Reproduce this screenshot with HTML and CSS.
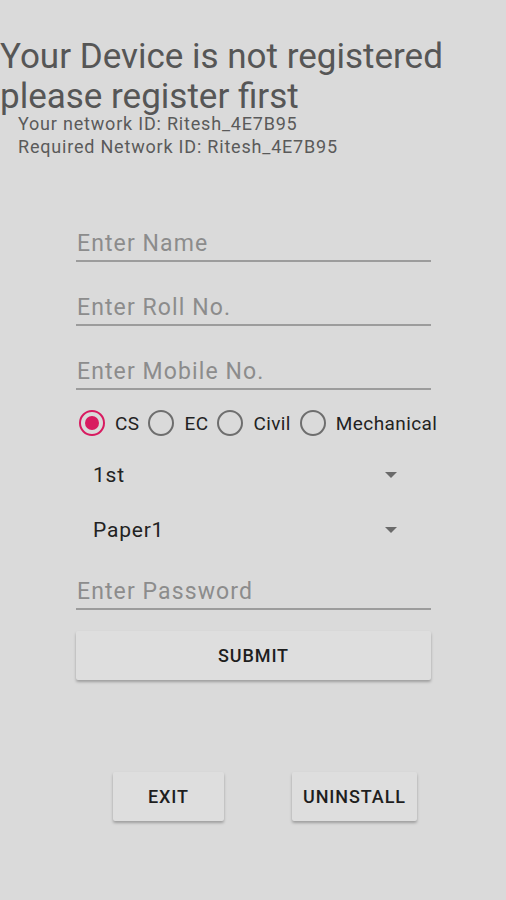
FILE: index.html
```html
<!DOCTYPE html>
<html lang="en">
<head>
  <meta charset="UTF-8" />
  <meta name="viewport" content="width=device-width, initial-scale=1.0"/>
  <title>Register Device</title>
  <link rel="stylesheet" href="styles.css">
</head>
<body>
  <h1 class="titulo">Your Device is not registered please register first</h1>

  <div class="rede">
    <div>Your network ID: Ritesh_4E7B95</div>
    <div>Required Network ID: Ritesh_4E7B95</div>
  </div>

  <form class="form">
    <input class="campo" type="text" placeholder="Enter Name" />
    <input class="campo" type="text" placeholder="Enter Roll No." />
    <input class="campo" type="text" placeholder="Enter Mobile No." />

    <div class="radios">
      <label class="radio"><span class="circulo marcado"></span>CS</label>
      <label class="radio"><span class="circulo"></span>EC</label>
      <label class="radio"><span class="circulo"></span>Civil</label>
      <label class="radio"><span class="circulo"></span>Mechanical</label>
    </div>

    <div class="spinner"><span>1st</span><span class="seta"></span></div>
    <div class="spinner"><span>Paper1</span><span class="seta"></span></div>

    <input class="campo senha" type="password" placeholder="Enter Password" />

    <button type="button" class="botao submit">SUBMIT</button>
  </form>

  <div class="acoes">
    <button type="button" class="botao exit">EXIT</button>
    <button type="button" class="botao">UNINSTALL</button>
  </div>
</body>
</html>
```

FILE: styles.css
```css
body {
  font-family: Roboto, "Liberation Sans", sans-serif;
  background: #dadada;
  margin: 0;
  padding: 0;
  width: 506px;
  height: 900px;
  overflow: hidden;
}
.titulo {
  font-size: 35px;
  font-weight: 400;
  line-height: 40px;
  color: #565656;
  margin: 0;
  padding-top: 37px;
  width: 470px;
}
.rede {
  margin-top: -5px;
  padding-left: 18px;
  font-size: 18px;
  line-height: 23px;
  letter-spacing: 0.8px;
  color: #5a5a5a;
}
.form {
  margin: 68px 0 0 76px;
  width: 355px;
}
.campo {
  display: block;
  box-sizing: border-box;
  width: 100%;
  height: 36px;
  padding: 0 1px;
  margin: 0 0 28px 0;
  border: none;
  border-bottom: 2px solid #9c9c9c;
  background: transparent;
  font-family: inherit;
  font-size: 23px;
  letter-spacing: 1.1px;
  color: #222;
  outline: none;
}
.campo::placeholder {
  color: #8c8c8c;
}
.radios {
  display: flex;
  align-items: center;
  height: 40px;
  margin: -15px 0 8px 0;
  padding-left: 3px;
  font-size: 19px;
  letter-spacing: 0.4px;
  color: #222;
  white-space: nowrap;
}
.radio {
  display: inline-flex;
  align-items: center;
  gap: 10px;
  margin-right: 9px;
}
.circulo {
  box-sizing: border-box;
  width: 26px;
  height: 26px;
  border: 2px solid #6e6e6e;
  border-radius: 50%;
  display: inline-flex;
  align-items: center;
  justify-content: center;
}
.circulo.marcado {
  border-color: #d81b60;
}
.circulo.marcado::after {
  content: "";
  width: 14px;
  height: 14px;
  border-radius: 50%;
  background: #d81b60;
}
.spinner {
  display: flex;
  align-items: center;
  justify-content: space-between;
  height: 48px;
  margin-bottom: 7px;
  padding: 0 34px 0 17px;
  font-size: 21px;
  line-height: 24px;
  letter-spacing: 0.8px;
  color: #222;
}
.seta {
  width: 0;
  height: 0;
  border-left: 6px solid transparent;
  border-right: 6px solid transparent;
  border-top: 6px solid #6a6a6a;
}
.senha {
  margin-top: 20px;
  margin-bottom: 21px;
}
.botao {
  font-family: inherit;
  font-size: 18px;
  font-weight: 500;
  letter-spacing: 0.9px;
  color: #1e1e1e;
  background: #dedede;
  border: none;
  border-radius: 2px;
  height: 49px;
  padding: 0 11px;
  box-shadow: 0 2px 3px rgba(0, 0, 0, 0.28);
}
.submit {
  display: block;
  width: 100%;
}
.acoes {
  display: flex;
  gap: 68px;
  margin-top: 92px;
  padding-left: 113px;
}
.exit {
  width: 111px;
}
```
